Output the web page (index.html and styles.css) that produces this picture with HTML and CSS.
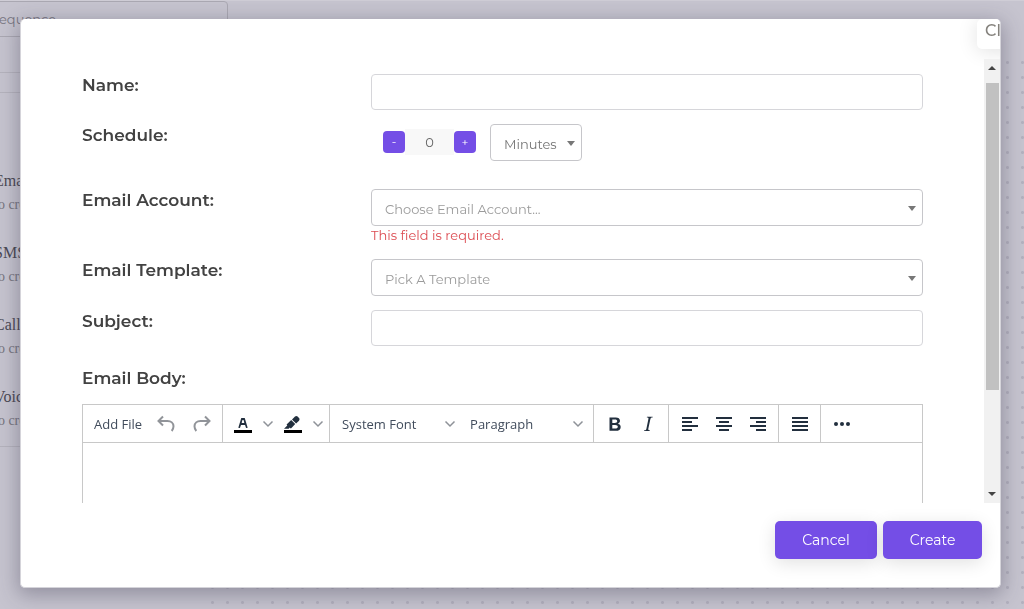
FILE: index.html
```html
<!DOCTYPE html>
<html lang="en">
<head>
<meta charset="utf-8">
<title>Email step</title>
<link rel="stylesheet" href="styles.css">
</head>
<body>
<div class="page">
  <aside class="sidebar">
    <div class="sequence-name">Sequence</div>
    <div class="divider"></div>
    <ul class="steps">
      <li><b>Email</b><span>to create</span></li>
      <li><b>SMS</b><span>to create</span></li>
      <li><b>Call</b><span>to create</span></li>
      <li><b>Voice</b><span>to create</span></li>
    </ul>
  </aside>
  <div class="canvas"></div>
</div>

<div class="overlay">
  <form class="modal" role="dialog" aria-label="Email step">
    <div class="modal-head"><button type="button" class="close">Close</button></div>
    <div class="modal-main">
      <div class="fields">
        <div class="row">
          <label for="name">Name:</label>
          <input class="control" id="name" type="text">
        </div>
        <div class="row row-schedule">
          <label for="amount">Schedule:</label>
          <div class="schedule">
            <div class="stepper">
              <button type="button" aria-label="Less">-</button>
              <input id="amount" type="text" value="0">
              <button type="button" aria-label="More">+</button>
            </div>
            <div class="select unit">
              <select aria-label="Unit"><option>Minutes</option></select>
            </div>
          </div>
        </div>
        <div class="row">
          <label for="account">Email Account:</label>
          <div>
            <div class="select muted"><select id="account"><option>Choose Email Account...</option></select></div>
            <p class="error">This field is required.</p>
          </div>
        </div>
        <div class="row">
          <label for="template">Email Template:</label>
          <div class="select muted"><select id="template"><option>Pick A Template</option></select></div>
        </div>
        <div class="row row-subject">
          <label for="subject">Subject:</label>
          <input class="control" id="subject" type="text">
        </div>
        <label class="body-label" for="body">Email Body:</label>
        <div class="editor">
          <div class="toolbar">
            <div class="group group-file">
              <button type="button">Add File</button>
              <button type="button" aria-label="Undo"><svg class="faded" width="24" height="24" viewBox="0 0 24 24"><path d="M9 4.500 4.500 9 9 13.500M5 9h8.500c3.500 0 6 2 6 5.300 0 1.700-.6 3.400-1.800 4.700"/></svg></button>
              <button type="button" aria-label="Redo"><svg class="faded" width="24" height="24" viewBox="0 0 24 24"><path d="M15 4.500 19.500 9 15 13.500M19 9h-8.500c-3.500 0-6 2-6 5.300 0 1.700.6 3.400 1.800 4.700"/></svg></button>
            </div>
            <div class="group group-colour">
              <button type="button" aria-label="Text colour"><svg width="24" height="24" viewBox="0 0 24 24"><path class="solid black" d="M3 18h18v3H3z"/><path class="solid" d="M8.700 16h-.8a.5.500 0 0 1-.5-.600l2.700-9c.1-.3.300-.4.500-.4h2.800c.2 0 .4.100.5.400l2.700 9a.5.500 0 0 1-.5.600h-.8a.5.500 0 0 1-.4-.4l-.7-2.200c0-.3-.3-.4-.5-.4h-3.400c-.2 0-.4.100-.5.400l-.7 2.200c0 .3-.2.400-.4.400zm2.600-7.600-.6 2a.5.500 0 0 0 .5.600h1.600a.5.500 0 0 0 .5-.600l-.6-2c0-.3-.3-.4-.5-.4h-.4c-.2 0-.4.100-.5.400z"/></svg></button>
              <button type="button" aria-label="Text colours"><svg class="chev" width="12" height="12" viewBox="0 0 12 12"><path d="m1.500 3.500 4.500 4.500 4.500-4.500"/></svg></button>
              <button type="button" aria-label="Highlight"><svg width="24" height="24" viewBox="0 0 24 24"><path class="solid black" d="M3 18h18v3H3z"/><path class="solid" d="M7.700 16.700H3l3.300-3.300-.7-.8L10.200 8l4 4.100-4 4.200c-.2.200-.6.200-.8 0l-.6-.7-1.100 1.100zm5-7.500L11 7.400l3-2.900a2 2 0 0 1 2.600 0L18 6c.7.700.7 2 0 2.700l-2.900 2.900-1.800-1.800-.5-.6z"/></svg></button>
              <button type="button" aria-label="Highlight colours"><svg class="chev" width="12" height="12" viewBox="0 0 12 12"><path d="m1.500 3.500 4.500 4.500 4.500-4.500"/></svg></button>
            </div>
            <div class="group group-style">
              <button type="button">System Font<svg class="chev" width="12" height="12" viewBox="0 0 12 12"><path d="m1.500 3.500 4.500 4.500 4.500-4.500"/></svg></button>
              <button type="button">Paragraph<svg class="chev" width="12" height="12" viewBox="0 0 12 12"><path d="m1.500 3.500 4.500 4.500 4.500-4.500"/></svg></button>
            </div>
            <div class="group">
              <button type="button" aria-label="Bold"><svg width="24" height="24" viewBox="0 0 24 24"><path class="solid" fill-rule="evenodd" d="M6.500 5.500h6.300c2.500 0 4.200 1.200 4.200 3.300 0 1.400-.8 2.400-2.200 2.900 1.800.3 2.900 1.500 2.900 3.200 0 2.500-1.900 3.900-4.900 3.900H6.500zm2.800 2.100v3.300h2.500c1.500 0 2.400-.6 2.400-1.700s-.8-1.600-2.200-1.600zm0 5.300v3.700h2.900c1.700 0 2.600-.6 2.600-1.800s-.9-1.900-2.600-1.900z"/></svg></button>
              <button type="button" aria-label="Italic"><svg width="24" height="24" viewBox="0 0 24 24"><path class="solid" d="m16.700 4.700-.1.900h-.3c-.6 0-1 0-1.400.3-.3.300-.4.600-.5 1.100l-2.100 9.800v.6c0 .5.400.8 1.400.8h.2l-.2.800H8l.2-.8h.2c1.100 0 1.800-.5 2-1.500l2-9.800.1-.5c0-.6-.4-.8-1.400-.8h-.3l.2-.9h5.700z"/></svg></button>
            </div>
            <div class="group group-align">
              <button type="button" aria-label="Align left"><svg class="lines" width="24" height="24" viewBox="0 0 24 24"><path d="M4 6h16M4 10h10M4 14h16M4 18h10"/></svg></button>
              <button type="button" aria-label="Align centre"><svg class="lines" width="24" height="24" viewBox="0 0 24 24"><path d="M4 6h16M7 10h10M4 14h16M7 18h10"/></svg></button>
              <button type="button" aria-label="Align right"><svg class="lines" width="24" height="24" viewBox="0 0 24 24"><path d="M4 6h16M10 10h10M4 14h16M10 18h10"/></svg></button>
            </div>
            <div class="group">
              <button type="button" aria-label="Justify"><svg class="lines" width="24" height="24" viewBox="0 0 24 24"><path d="M4 6h16M4 10h16M4 14h16M4 18h16"/></svg></button>
            </div>
            <div class="group">
              <button type="button" aria-label="More tools"><svg width="24" height="24" viewBox="0 0 24 24"><g class="solid"><circle cx="6" cy="12" r="2"/><circle cx="12" cy="12" r="2"/><circle cx="18" cy="12" r="2"/></g></svg></button>
            </div>
          </div>
          <textarea id="body"></textarea>
        </div>
      </div>
      <div class="scrollbar">
        <svg width="16" height="16" viewBox="0 0 16 16"><path d="m4 11 4-4 4 4z"/></svg>
        <div class="track"><div class="thumb"></div></div>
        <svg width="16" height="16" viewBox="0 0 16 16"><path d="m4 5 4 4 4-4z"/></svg>
      </div>
    </div>
    <div class="modal-foot">
      <button type="button">Cancel</button>
      <button type="submit">Create</button>
    </div>
  </form>
</div>
</body>
</html>
```

FILE: styles.css
```css
* { box-sizing: border-box; }

body {
  margin: 0;
  height: 100vh;
  overflow: hidden;
  background: #c6c4cf;
  color: #424242;
  font-family: Montserrat, Inter, sans-serif;
  font-size: 13px;
}

button, input, select, textarea { font: inherit; color: inherit; margin: 0; }
button { border: 0; padding: 0; background: none; }
label { font-size: 17px; font-weight: 600; line-height: 23px; }

/* Page under the dialog */
.page { display: flex; height: 100vh; border-top: 1px solid #cfcdd6; }
.sidebar { width: 240px; margin-left: -12px; flex: none; }
.sequence-name {
  height: 36px;
  line-height: 34px;
  padding-left: 2px;
  border: 1px solid #aaa8b2;
  border-radius: 4px;
  color: #77757f;
}
.divider { height: 21px; margin-top: 35px; border: solid #b5b3bd; border-width: 1px 0; }
.steps {
  height: 354px;
  margin: 0;
  padding: 76px 0 0 6px;
  border-bottom: 1px solid #b5b3bd;
  list-style: none;
  font-family: "Liberation Serif", serif;
}
.steps li { height: 72px; }
.steps b, .steps span { display: block; line-height: 24px; }
.steps b { color: #4b4954; font-size: 16px; font-weight: 400; }
.steps span { color: #777580; font-size: 14px; }
.canvas {
  flex: 1;
  margin: 54px 0 0 -23px;
  background: radial-gradient(circle, #b3b1be 1px, transparent 2px) 0 0 / 15px 15px;
}

/* Dialog */
.overlay { position: fixed; inset: 0; display: flex; padding: 19px 23px 21px 20px; }
.modal {
  flex: 1;
  min-width: 0;
  display: flex;
  flex-direction: column;
  overflow: hidden;
  background: #fff;
  border: 1px solid #d5d4da;
  border-top: 0;
  border-radius: 5px;
}
.overlay::before {
  content: "";
  position: absolute;
  inset: 19px 23px 21px 20px;
  z-index: -1;
  border-radius: 5px;
  box-shadow: 0 5px 20px 2px rgba(50, 45, 70, .35);
}
.modal-head { display: flex; justify-content: flex-end; height: 40px; flex: none; }
.close {
  width: 64px;
  height: 30px;
  margin-right: -41px;
  padding: 0 0 8px 8px;
  border-radius: 5px;
  background: #fff;
  box-shadow: 0 2px 20px rgba(0, 0, 0, .12);
  color: #85827d;
  font-size: 16px;
  font-weight: 500;
  text-align: left;
}
.modal-main { flex: 1; min-height: 0; display: flex; overflow: hidden; }
.fields {
  flex: 1;
  min-width: 0;
  padding: 15px 61px 0;
  overflow: hidden;
}
.row {
  display: grid;
  grid-template-columns: 289fr 552fr;
  align-items: start;
  margin-bottom: 14px;
}
.row-schedule { margin-bottom: 28px; }
.row-subject { margin-bottom: 21px; }
.control {
  width: 100%;
  height: 36px;
  padding: 0 13px;
  border: 1px solid #d6d6da;
  border-radius: 4px;
  background: #fff;
}
.schedule { display: flex; align-items: center; gap: 14px; padding-left: 12px; }
.stepper { display: flex; align-items: center; margin-top: -2px; }
.stepper button {
  width: 22px;
  height: 22px;
  border-radius: 4px;
  background: #744ee6;
  color: #fff;
  font-size: 12px;
}
.stepper input {
  width: 49px;
  height: 26px;
  border: 0;
  padding: 0;
  background: #f8f8f8;
  text-align: center;
  color: #666;
}
.select { position: relative; color: #757575; }
.select::after {
  content: "";
  position: absolute;
  right: 7px;
  top: 17px;
  border: solid transparent;
  border-width: 5px 4px 0;
  border-top-color: #777;
}
.select select {
  display: block;
  width: 100%;
  height: 37px;
  padding: 2px 13px 0;
  border: 1px solid #c6c6ca;
  border-radius: 4px;
  background: #fff;
  appearance: none;
}
.unit { width: 92px; }
.unit select { padding-right: 0; }
.muted { color: #9b9b9b; }
.error { margin: 0; color: #dc4c52; line-height: 19px; }
.body-label { display: block; margin-bottom: 14px; }

/* Editor */
.editor { border: 1px solid #c8c8c8; }
.editor textarea {
  display: block;
  width: 100%;
  height: 300px;
  border: 0;
  padding: 12px;
  resize: none;
}
.toolbar {
  display: flex;
  height: 38px;
  border-bottom: 1px solid #c8c8c8;
  color: #414c5c;
  font-family: "Open Sans", "Noto Sans", sans-serif;
}
.group { display: flex; align-items: center; gap: 9px; padding: 0 8px 0 9px; }
.group + .group { border-left: 1px solid #c8c8c8; }
.group-align { gap: 10px; }
.group-file { padding: 0 8px 0 11px; gap: 12px; }
.group-colour { padding: 0 5px 0 8px; gap: 7px; }
.group-style { padding: 0 9px 0 12px; gap: 14px; }
.group-style button { display: flex; justify-content: space-between; align-items: center; width: 114px; }
.toolbar svg { display: block; fill: none; stroke: #222f3e; stroke-width: 2; }
.toolbar .solid { fill: #222f3e; stroke: none; }
.toolbar .black { fill: #000; }
.toolbar .faded { stroke: #919499; }
.toolbar .chev { stroke: #8e9298; stroke-width: 1.5; }

/* Scroll bar */
.scrollbar { display: flex; flex-direction: column; width: 16px; background: #f1f1f1; }
.scrollbar svg { flex: none; fill: #444; }
.track { flex: 1; padding: 8px 1px 0 2px; }
.thumb { height: 76%; background: #c1c1c1; }

.modal-foot { display: flex; justify-content: flex-end; gap: 6px; padding: 18px 18px 28px; }
.modal-foot button {
  width: 102px;
  height: 38px;
  border-radius: 5px;
  background: #744ee6;
  box-shadow: 0 4px 18px rgba(0, 0, 0, .12);
  color: #fff;
  font-size: 14px;
}
.modal-foot button + button { width: 99px; }
```
